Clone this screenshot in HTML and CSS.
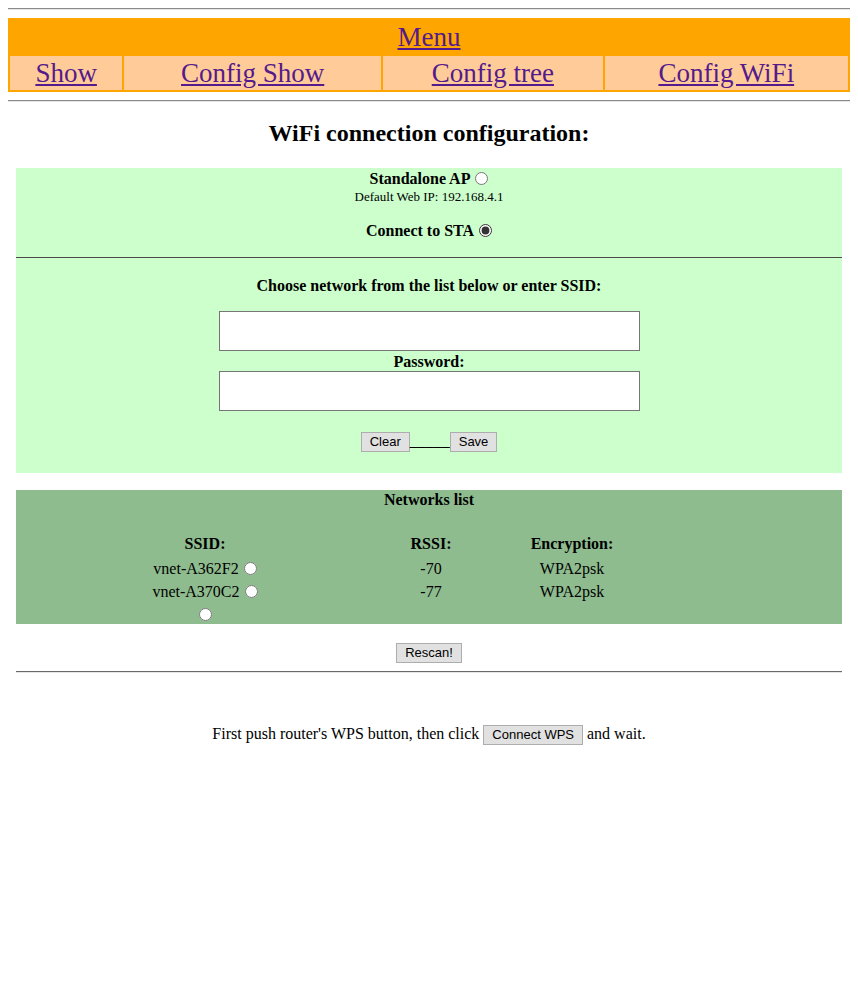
FILE: index.html
```html
<!DOCTYPE html>
<html>
<head>
<meta charset="utf-8">
<title>WiFi configuration</title>
<link rel="stylesheet" href="styles.css">
</head>
<body>
<hr class="rule">
<table class="menu">
  <tr><th colspan="4" class="menu-head"><a href="#">Menu</a></th></tr>
  <tr>
    <td><a href="#">Show</a></td>
    <td><a href="#">Config Show</a></td>
    <td><a href="#">Config tree</a></td>
    <td><a href="#">Config WiFi</a></td>
  </tr>
</table>
<hr class="rule">
<h2 class="title">WiFi connection configuration:</h2>

<div class="panel config">
  <div class="mode"><b>Standalone AP</b> <input type="radio" name="mode"></div>
  <div class="ip">Default Web IP: 192.168.4.1</div>
  <div class="mode sta"><b>Connect to STA</b> <input type="radio" name="mode" checked></div>
  <hr class="sep">
  <div class="label choose">Choose network from the list below or enter SSID:</div>
  <input class="field ssid" type="text">
  <div class="label pw">Password:</div>
  <input class="field pass" type="password">
  <div class="actions"><button class="btn">Clear</button>_____<button class="btn">Save</button></div>
</div>

<div class="panel networks">
  <div class="net-title">Networks list</div>
  <div class="net-grid">
    <div class="cell head">SSID:</div><div class="cell head">RSSI:</div><div class="cell head">Encryption:</div><div class="cell"></div>
    <div class="cell">vnet-A362F2 <input type="radio" name="net"></div><div class="cell">-70</div><div class="cell">WPA2psk</div><div class="cell"></div>
    <div class="cell">vnet-A370C2 <input type="radio" name="net"></div><div class="cell">-77</div><div class="cell">WPA2psk</div><div class="cell"></div>
    <div class="cell"><input type="radio" name="net"></div><div class="cell"></div><div class="cell"></div><div class="cell"></div>
  </div>
</div>

<div class="rescan-row"><button class="btn">Rescan!</button></div>
<hr class="rule inner">
<div class="wps">First push router's WPS button, then click <button class="btn">Connect WPS</button> and wait.</div>
</body>
</html>
```

FILE: styles.css
```css
body {
  margin: 0 8px 8px;
  font-family: "Liberation Serif", "Times New Roman", serif;
  font-size: 16px;
  color: #000;
  background: #fff;
}

a {
  color: #551a8b;
  text-decoration: underline;
}

.rule {
  margin: 8px 0;
  border: 0;
  border-top: 1px solid #8a8a8a;
  border-bottom: 1px solid #e6e6e6;
  height: 0;
}

.rule.inner {
  margin: 9px 8px 0;
  border-top-color: #6a6a6a;
}

.menu {
  width: 100%;
  background: #ffa500;
  border-spacing: 2px;
  font-size: 27px;
}

.menu th,
.menu td {
  padding: 1px;
  text-align: center;
  font-weight: normal;
  line-height: 32px;
}

.menu td {
  background: #ffcc99;
}

.title {
  text-align: center;
  font-size: 24px;
  font-weight: bold;
  margin: 17px 0 21px;
  line-height: 28px;
}

.panel {
  margin: 0 8px;
  text-align: center;
}

.config {
  background: #ccffcc;
  padding-top: 1px;
  padding-bottom: 22px;
}

.mode {
  font-weight: bold;
  height: 19px;
  line-height: 19px;
}

.mode input {
  margin: 0 0 0 1px;
  vertical-align: -1px;
  accent-color: #333;
}

.ip {
  font-size: 13px;
  line-height: 17px;
}

.mode.sta {
  margin-top: 16px;
}

.sep {
  margin: 17px 0 0;
  border: 0;
  border-top: 1px solid #4a4a4a;
  height: 0;
}

.label {
  font-weight: bold;
  line-height: 19px;
}

.choose {
  margin-top: 18px;
}

.pw {
  margin-top: 1px;
}

.field {
  display: block;
  box-sizing: border-box;
  width: 421px;
  height: 40px;
  margin: 0 auto;
  border: 1px solid #767676;
  background: #fff;
  padding: 0 4px;
}

.ssid {
  margin-top: 16px;
}

.actions {
  margin-top: 20px;
  height: 20px;
  line-height: 20px;
}

.btn {
  font-family: "Liberation Sans", Arial, sans-serif;
  font-size: 13px;
  line-height: 16px;
  padding: 1px 8px;
  margin: 0;
  border: 1px solid #adadad;
  background: #e1e1e1;
  color: #000;
  border-radius: 0;
}

.networks {
  background: #8fbc8f;
  margin-top: 17px;
  padding-top: 1px;
  height: 133px;
}

.net-title {
  font-weight: bold;
  line-height: 18px;
}

.net-grid {
  display: grid;
  grid-template-columns: 378px 74px 208px 1fr;
  grid-template-rows: 24px 26px 20px 26px;
  margin-top: 23px;
  align-items: center;
}

.cell {
  text-align: center;
  line-height: 20px;
}

.cell.head {
  font-weight: bold;
}

.cell input {
  margin: 0 0 0 1px;
  vertical-align: -1px;
}

.rescan-row {
  margin-top: 18px;
  text-align: center;
  height: 20px;
  line-height: 20px;
}

.wps {
  margin-top: 51px;
  text-align: center;
  line-height: 20px;
}
```
